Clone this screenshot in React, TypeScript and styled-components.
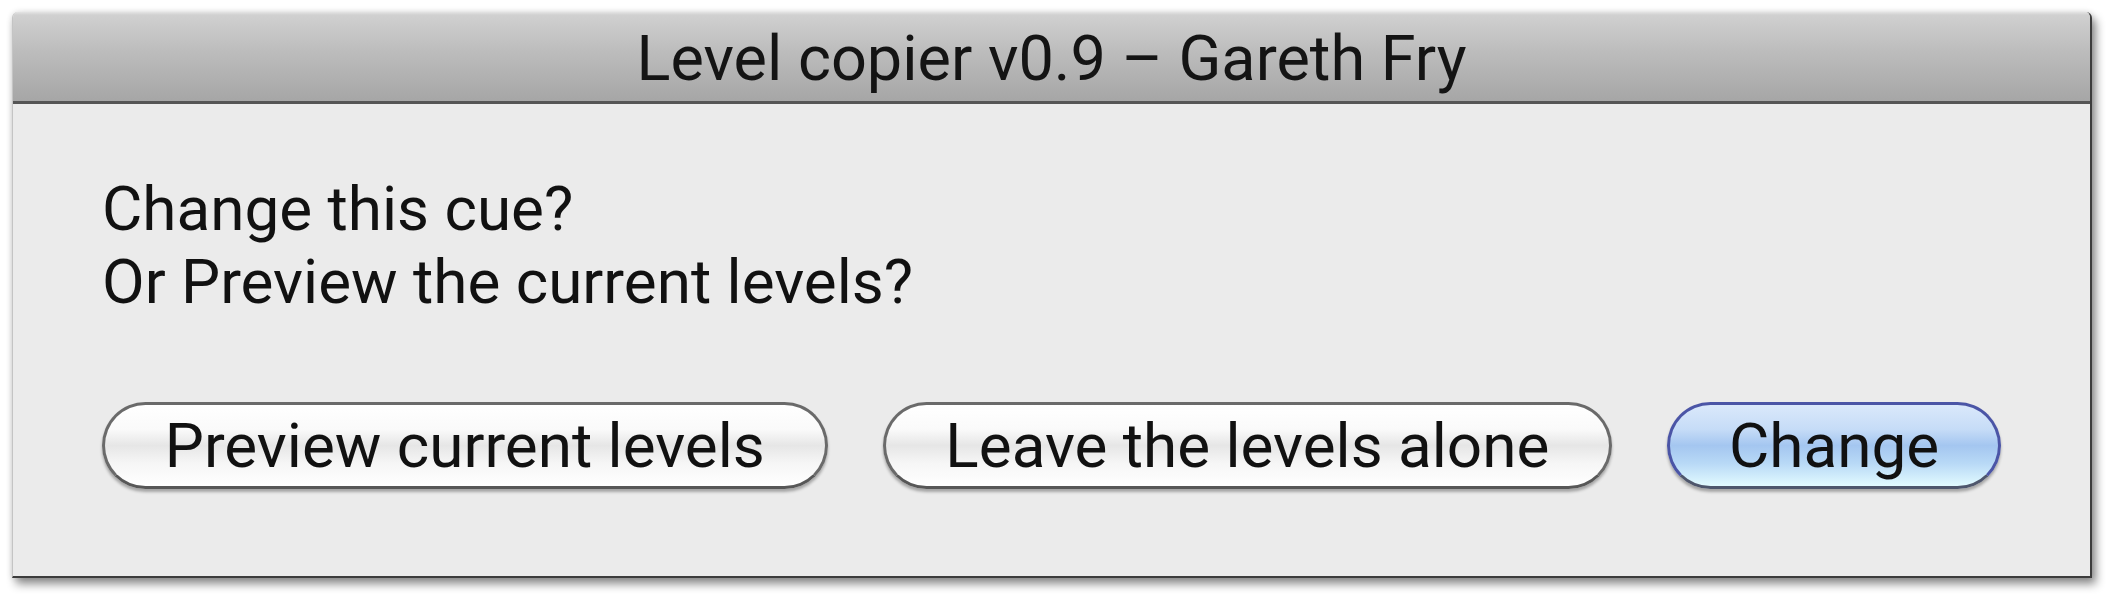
import styled, { createGlobalStyle } from 'styled-components';

const GlobalStyle = createGlobalStyle`
    html, body {
        margin: 0;
        padding: 0;
        background: #ffffff;
    }
`;

const Page = styled.div`
    width: 2114px;
    height: 600px;
    padding: 12px 0 0 12px;
    box-sizing: border-box;
`;

const Window = styled.div`
    width: 2080px;
    height: 566px;
    display: flex;
    flex-direction: column;
    background: #ebebeb;
    border-left: 1px solid #c4c4c4;
    border-right: 2px solid #3c3c3c;
    border-bottom: 2px solid #3c3c3c;
    box-sizing: border-box;
    border-radius: 6px 6px 0 0;
    box-shadow: 4px 6px 10px rgba(0, 0, 0, 0.45), 0 0 6px rgba(0, 0, 0, 0.12);
    font-family: Roboto, "Liberation Sans", sans-serif;
    color: #111111;
    overflow: hidden;
`;

const TitleBar = styled.div`
    height: 89px;
    flex-shrink: 0;
    display: flex;
    align-items: center;
    justify-content: center;
    background: linear-gradient(to bottom, #e4e4e4 0px, #d0d0d0 3px, #bcbcbc 45%, #a6a6a6 100%);
    border-bottom: 3px solid #555555;
`;

const Title = styled.span`
    font-size: 63px;
    color: #141414;
    padding-top: 4px;
`;

const Body = styled.div`
    flex: 1;
    display: flex;
    flex-direction: column;
    padding: 68px 89px 0 89px;
`;

const Message = styled.p`
    margin: 0;
    font-size: 62px;
    line-height: 73px;
`;

const ButtonRow = styled.div`
    display: flex;
    gap: 55px;
    margin-top: 84px;
`;

const PushButton = styled.button<{ $default?: boolean; $width: number }>`
    width: ${(p) => p.$width}px;
    height: 87px;
    box-sizing: border-box;
    border-radius: 44px;
    border: 3px solid ${(p) => (p.$default ? '#4b55a6' : '#6a6a6a')};
    border-bottom-color: ${(p) => (p.$default ? '#4e566c' : '#575757')};
    background: ${(p) =>
        p.$default
            ? 'linear-gradient(to bottom, #dae8fb 0%, #c6dcf7 30%, #a4c6f0 50%, #b8d9f6 72%, #e2fbff 100%)'
            : 'linear-gradient(to bottom, #ffffff 0%, #fafafa 30%, #e6e6e6 50%, #f6f6f6 72%, #ffffff 100%)'};
    box-shadow: 0 3px 3px rgba(0, 0, 0, 0.3);
    font-family: Roboto, "Liberation Sans", sans-serif;
    font-size: 62px;
    color: #111111;
    padding: 0;
    display: flex;
    align-items: center;
    justify-content: center;
`;

function App() {
    return (
        <Page>
            <GlobalStyle />
            <Window>
                <TitleBar>
                    <Title>Level copier v0.9 – Gareth Fry</Title>
                </TitleBar>
                <Body>
                    <Message>Change this cue?</Message>
                    <Message>Or Preview the current levels?</Message>
                    <ButtonRow>
                        <PushButton $width={728}>Preview current levels</PushButton>
                        <PushButton $width={732}>Leave the levels alone</PushButton>
                        <PushButton $width={335} $default>Change</PushButton>
                    </ButtonRow>
                </Body>
            </Window>
        </Page>
    );
}

export default App;
